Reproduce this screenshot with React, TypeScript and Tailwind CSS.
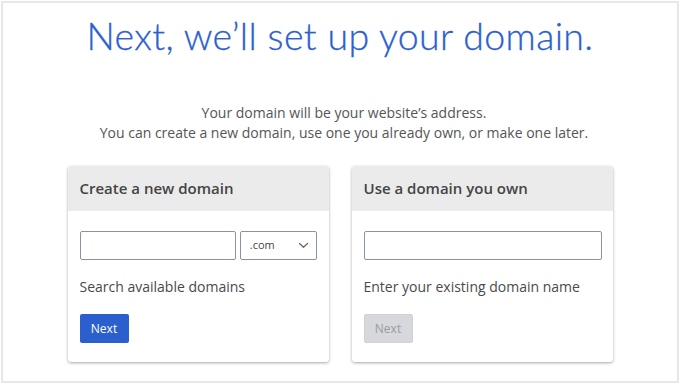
import React from "react";

function Chevron() {
  return (
    <svg width="11" height="7" viewBox="0 0 11 7" fill="none">
      <path d="M1.5 1.5 L5.5 5.3 L9.5 1.5" stroke="#666" strokeWidth="1.2" strokeLinecap="round" strokeLinejoin="round" />
    </svg>
  );
}

function Card({ title, children }: { title: string; children: React.ReactNode }) {
  return (
    <div className="w-[261px] h-[196px] bg-white rounded-[3px] shadow-[0_1px_3px_rgba(0,0,0,0.35)] overflow-hidden flex flex-col">
      <div className="h-[45px] bg-[#ebebeb] flex items-center px-[12px] text-[15px] font-semibold text-[#444] shrink-0">
        {title}
      </div>
      <div className="flex flex-col px-[12px] pt-[20px]">{children}</div>
    </div>
  );
}

export default function App() {
  return (
    <div className="w-[680px] h-[384px] bg-white pt-[1px] pl-[1px] font-['Open_Sans',sans-serif]">
      <div className="w-[678px] h-[382px] border-2 border-[#e8e8e8] flex flex-col items-center">
        <h1 className="mt-[9px] text-[37.5px] leading-[48px] text-[#2b60d0] font-['Lato',sans-serif] font-light tracking-[0.35px] [-webkit-text-stroke:0.3px_#2b60d0]">
          Next, we’ll set up your domain.
        </h1>
        <div className="mt-[43px] text-[14px] leading-[20px] text-[#555] text-center pl-[8px]">
          <p>Your domain will be your website’s address.</p>
          <p>You can create a new domain, use one you already own, or make one later.</p>
        </div>
        <div className="mt-[23px] flex gap-[23px]">
          <Card title="Create a new domain">
            <div className="flex gap-[4px]">
              <div className="w-[157px] h-[29px] border border-[#8a93a6] rounded-[2px] bg-white" />
              <div className="w-[77px] h-[29px] border border-[#8a93a6] rounded-[2px] bg-white flex items-center justify-between pl-[9px] pr-[7px] text-[11px] text-[#444]">
                <span>.com</span>
                <Chevron />
              </div>
            </div>
            <div className="mt-[17px] text-[14px] leading-[20px] text-[#4a4a4a]">Search available domains</div>
            <div className="mt-[17px]">
              <div className="w-[49px] h-[29px] rounded-[2px] bg-[#2b5fce] flex items-center justify-center text-[12px] text-white font-medium">
                Next
              </div>
            </div>
          </Card>
          <Card title="Use a domain you own">
            <div className="w-[238px] h-[29px] border border-[#8a93a6] rounded-[2px] bg-white" />
            <div className="mt-[17px] text-[14px] leading-[20px] text-[#4a4a4a]">Enter your existing domain name</div>
            <div className="mt-[17px]">
              <div className="w-[49px] h-[29px] rounded-[2px] bg-[#d6d8db] border border-[#cfd1d4] flex items-center justify-center text-[12px] text-[#9b9b9b]">
                Next
              </div>
            </div>
          </Card>
        </div>
      </div>
    </div>
  );
}
